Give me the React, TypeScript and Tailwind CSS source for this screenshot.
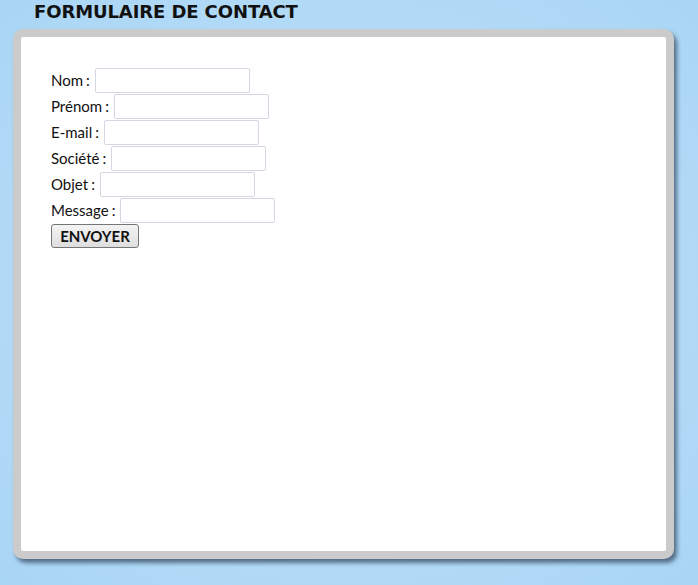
import React from 'react';

const fields = ['Nom', 'Prénom', 'E-mail', 'Société', 'Objet', 'Message'];

export default function App() {
  return (
    <div className="min-h-[585px] w-full bg-[radial-gradient(ellipse_at_center,#c0e4fc_0%,#b5dcf8_55%,#a9d5f4_100%)] font-['Lato',sans-serif] text-black">
      <h1 className="h-[29px] pl-[34px] pt-[2px] font-['DejaVu_Sans',sans-serif] text-[18px] font-bold leading-[20px] tracking-[-0.1px] text-[#111]">
        FORMULAIRE DE CONTACT
      </h1>
      <div className="ml-[13px] mr-[24px] h-[530px] rounded-[10px] border-[8px] border-[#cbcbcb] bg-white shadow-[3px_4px_4px_rgba(55,75,100,0.75)]">
        <form className="flex flex-col px-[30px] pt-[30px]" onSubmit={(e) => e.preventDefault()}>
          {fields.map((label) => (
            <div key={label} className="flex h-[26px] items-center">
              <label className="text-[15px] leading-[26px] text-[#111]">
                {label}<span className="ml-[3px]">:</span>
              </label>
              <input
                type="text"
                className="ml-[5px] h-[25px] w-[155px] rounded-[2px] border border-[#d6d6e2] bg-white outline-none"
              />
            </div>
          ))}
          <div className="mt-[1px]">
            <button
              type="submit"
              className="h-[24px] w-[88px] rounded-[3px] border border-[#767676] bg-[linear-gradient(#f4f4f4,#dedede)] text-[15px] font-bold leading-[20px] text-[#111]"
            >
              ENVOYER
            </button>
          </div>
        </form>
      </div>
    </div>
  );
}
